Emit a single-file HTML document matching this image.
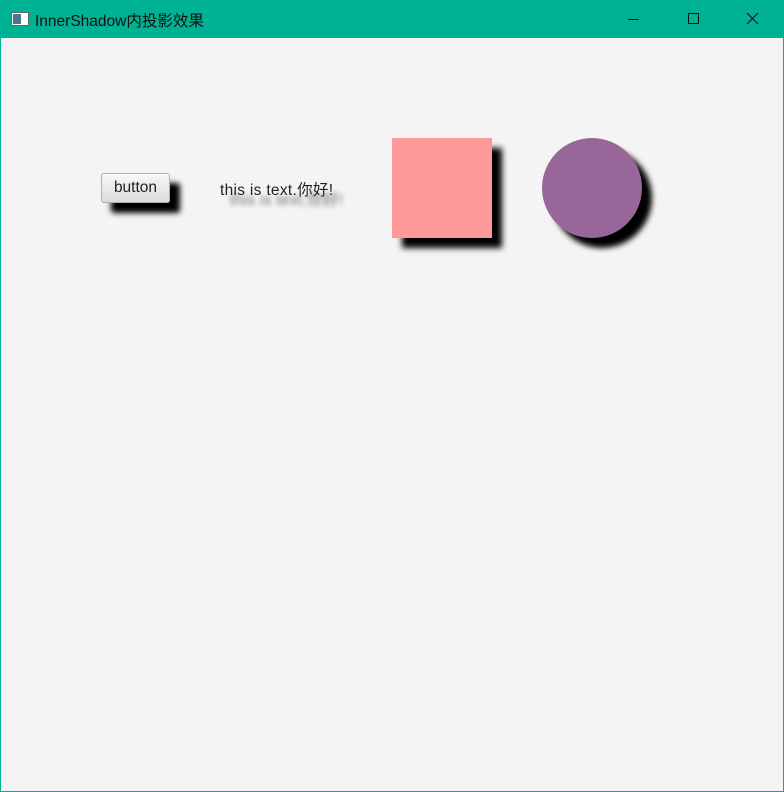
<!DOCTYPE html>
<html><head><meta charset="utf-8"><style>
body{margin:0;width:784px;height:792px;overflow:hidden;background:#00b294;font-family:"Liberation Sans","Noto Sans CJK SC",sans-serif;position:relative}
.title{position:absolute;left:0;top:0;width:784px;height:38px;background:#00b294}
.ttext{position:absolute;left:35px;top:9px;font-size:15.5px;color:#111}
.client{position:absolute;left:1px;top:38px;width:782px;height:753px;background:#f4f4f4}
.btn{position:absolute;left:101px;top:173px;width:69px;height:30px;box-sizing:border-box;border:1px solid #b0b0b0;border-radius:3px;background:linear-gradient(#f8f8f8,#dcdcdc);font-size:15.5px;color:#222;text-align:center;line-height:28px;box-shadow:10px 10px 6px #000}
.txt{position:absolute;left:220px;top:178px;font-size:15.5px;letter-spacing:0.3px;color:#222;text-shadow:10px 10px 5px rgba(0,0,0,.55)}
.sq{position:absolute;left:392px;top:138px;width:100px;height:100px;background:#ff9999;box-shadow:10px 10px 6px #000}
.ci{position:absolute;left:542px;top:138px;width:100px;height:100px;border-radius:50%;background:#996699;box-shadow:10px 10px 6px #000}
</style></head><body>
<div class="title">
<svg style="position:absolute;left:11px;top:12px" width="18" height="14"><rect x="0.5" y="0.5" width="17" height="13" fill="#fff" stroke="#666"/><rect x="2" y="2" width="8" height="10" fill="#4a7a8a"/></svg>
<div class="ttext">InnerShadow内投影效果</div>
<svg style="position:absolute;left:628px;top:12px" width="140" height="14"><line x1="0" y1="7.5" x2="11" y2="7.5" stroke="#111"/><rect x="60.5" y="1.5" width="10" height="10" fill="none" stroke="#111"/><path d="M119 1L130 12M130 1L119 12" stroke="#111" stroke-width="1.1"/></svg>
</div>
<div class="client"></div>
<div class="btn">button</div>
<div class="txt">this is text.你好!</div>
<div class="sq"></div>
<div class="ci"></div>
</body></html>
